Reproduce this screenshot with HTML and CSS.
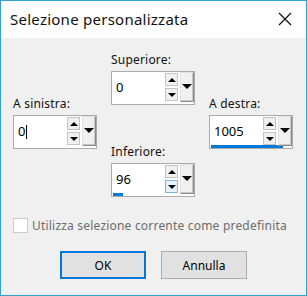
FILE: index.html
```html
<!DOCTYPE html>
<html lang="it">
<head>
    <meta charset="UTF-8">
    <title>Selezione personalizzata</title>
    <link rel="stylesheet" href="styles.css">
</head>
<body>
    <div class="dialog">
        <div class="titlebar">
            <span class="title">Selezione personalizzata</span>
            <svg class="close" width="14" height="14" viewBox="0 0 14 14">
                <path d="M1 1 L13 13 M13 1 L1 13" stroke="#000" stroke-width="1.1" fill="none"/>
            </svg>
        </div>
        <div class="content">
            <div class="fields">
                <div class="col side">
                    <div class="field">
                        <div class="label">A sinistra:</div>
                        <div class="box">
                            <div class="row">
                                <div class="value">0<span class="caret"></span></div>
                                <div class="spin">
                                    <span class="btn up"></span>
                                    <span class="btn down"></span>
                                </div>
                                <span class="drop"></span>
                            </div>
                            <div class="track"><div class="fill" style="width: 0%"></div></div>
                        </div>
                    </div>
                </div>
                <div class="col middle">
                    <div class="field">
                        <div class="label">Superiore:</div>
                        <div class="box">
                            <div class="row">
                                <div class="value">0</div>
                                <div class="spin">
                                    <span class="btn up"></span>
                                    <span class="btn down"></span>
                                </div>
                                <span class="drop"></span>
                            </div>
                            <div class="track"><div class="fill" style="width: 0%"></div></div>
                        </div>
                    </div>
                    <div class="field lower">
                        <div class="label">Inferiore:</div>
                        <div class="box">
                            <div class="row">
                                <div class="value">96</div>
                                <div class="spin">
                                    <span class="btn up"></span>
                                    <span class="btn down hover"></span>
                                </div>
                                <span class="drop"></span>
                            </div>
                            <div class="track"><div class="fill" style="width: 14%"></div></div>
                        </div>
                    </div>
                </div>
                <div class="col side">
                    <div class="field">
                        <div class="label">A destra:</div>
                        <div class="box">
                            <div class="row">
                                <div class="value">1005</div>
                                <div class="spin">
                                    <span class="btn up"></span>
                                    <span class="btn down"></span>
                                </div>
                                <span class="drop"></span>
                            </div>
                            <div class="track"><div class="fill" style="width: 100%"></div></div>
                        </div>
                    </div>
                </div>
            </div>
            <label class="check">
                <span class="checkbox"></span>
                <span>Utilizza selezione corrente come predefinita</span>
            </label>
            <div class="buttons">
                <button class="default">OK</button>
                <button>Annulla</button>
            </div>
        </div>
    </div>
</body>
</html>
```

FILE: styles.css
```css
* {
    margin: 0;
    padding: 0;
    box-sizing: border-box;
}
body {
    font-family: "Noto Sans", "DejaVu Sans", sans-serif;
    font-size: 12px;
    color: #000;
    background: #fff;
}
.dialog {
    width: 307px;
    height: 296px;
    border: 1px solid #33a1c9;
    background: #f0f0f0;
}
.titlebar {
    height: 37px;
    background: #fff;
    display: flex;
    align-items: center;
    justify-content: space-between;
    padding: 0 14px 0 9px;
}
.title {
    font-size: 15px;
    letter-spacing: 0.25px;
    color: #111;
    margin-top: -1px;
}
.close {
    display: block;
    margin-top: -2px;
}
.content {
    padding: 14px 12px 0 12px;
}
.fields {
    display: flex;
    gap: 14px;
    align-items: flex-start;
}
.col {
    width: 84px;
}
.side {
    margin-top: 44px;
}
.field.lower {
    margin-top: 39px;
}
.label {
    height: 16px;
    line-height: 16px;
    margin-bottom: 3px;
    white-space: nowrap;
    letter-spacing: 0.2px;
    color: #111;
}
.box {
    height: 34px;
    background: #fff;
    border: 1px solid #acacac;
}
.row {
    display: flex;
    height: 29px;
}
.value {
    flex: 1;
    font-size: 13px;
    line-height: 29px;
    padding: 2px 0 0 4px;
    display: flex;
    align-items: center;
}
.caret {
    display: inline-block;
    width: 1px;
    height: 14px;
    background: #000;
    margin-left: 1px;
}
.spin {
    width: 13px;
    margin: 1px 2px 0 0;
    display: flex;
    flex-direction: column;
    gap: 2px;
}
.btn {
    display: flex;
    align-items: center;
    justify-content: center;
    height: 13px;
    background: #f0f0f0;
    border: 1px solid #c4c4c4;
}
.btn.hover {
    background: #e5f1fb;
    border-color: #7ab4e8;
}
.btn::before {
    content: "";
    width: 0;
    height: 0;
    border-left: 4px solid transparent;
    border-right: 4px solid transparent;
}
.up::before {
    border-bottom: 4px solid #000;
}
.down::before {
    border-top: 4px solid #000;
}
.drop {
    width: 14px;
    height: 30px;
    background: #f0f0f0;
    border-top: 1px solid #e3e3e3;
    border-left: 1px solid #e3e3e3;
    border-right: 1px solid #8c8c8c;
    border-bottom: 1px solid #8c8c8c;
    box-shadow: inset -1px -1px 0 #c8c8c8;
    display: flex;
    justify-content: center;
    padding-top: 11px;
}
.drop::before {
    content: "";
    width: 0;
    height: 0;
    border-left: 5px solid transparent;
    border-right: 5px solid transparent;
    border-top: 5px solid #000;
}
.track {
    width: 72px;
    height: 3px;
    margin-left: 1px;
}
.fill {
    height: 100%;
    background: #0078d7;
}
.check {
    display: flex;
    align-items: center;
    gap: 4px;
    margin-top: 20px;
    color: #6d6d6d;
    font-size: 12px;
    letter-spacing: 0.2px;
}
.checkbox {
    width: 15px;
    height: 15px;
    background: #fff;
    border: 1px solid #cccccc;
}
.buttons {
    display: flex;
    justify-content: center;
    gap: 15px;
    margin-top: 17px;
}
button {
    width: 86px;
    height: 28px;
    font-family: inherit;
    font-size: 12px;
    color: #000;
    background: #e1e1e1;
    border: 1px solid #adadad;
}
button.default {
    border: 2px solid #0078d7;
}
```
